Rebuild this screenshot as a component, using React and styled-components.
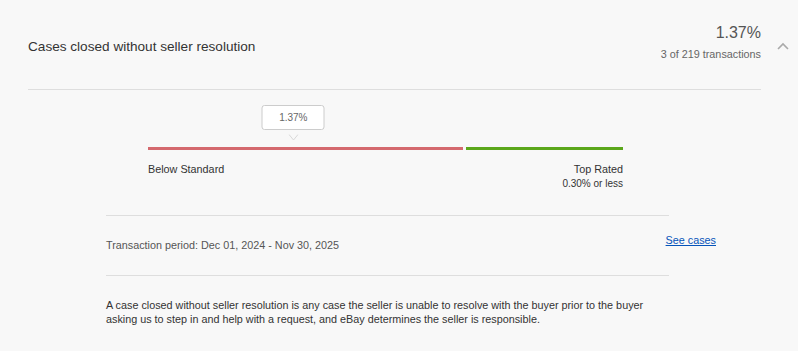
import React from 'react';
import styled, { createGlobalStyle } from 'styled-components';

const GlobalStyle = createGlobalStyle`
  html, body {
    margin: 0;
    padding: 0;
    background: #f8f8f8;
  }
  body {
    font-family: "Liberation Sans", Arial, Helvetica, sans-serif;
    color: #333;
  }
`;

const Page = styled.div`
  padding-left: 28px;
`;

const Header = styled.div`
  display: flex;
  align-items: flex-start;
`;

const HeaderMain = styled.div`
  box-sizing: border-box;
  width: 733px;
  height: 90px;
  padding-top: 22px;
  border-bottom: 1px solid #dedede;
  display: flex;
  justify-content: space-between;
  align-items: flex-start;
`;

const Title = styled.h2`
  margin: 15px 0 0;
  font-size: 13.6px;
  line-height: 20px;
  font-weight: normal;
  color: #333;
`;

const Summary = styled.div`
  text-align: right;
`;

const Rate = styled.div`
  font-size: 16px;
  line-height: 22px;
  color: #555;
`;

const Count = styled.div`
  margin-top: 3px;
  font-size: 10.8px;
  line-height: 14px;
  color: #666;
`;

const Toggle = styled.button`
  margin: 42px 0 0 16px;
  padding: 0;
  border: 0;
  background: none;
  width: 12px;
  height: 8px;
  display: flex;
  cursor: pointer;
`;

const Body = styled.div`
  margin-left: 78px;
  width: 563px;
  font-size: 10.8px;
`;

const Scale = styled.div`
  padding: 15px 46px 0 42px;
`;

const Track = styled.div`
  position: relative;
  padding-top: 42px;
`;

const Marker = styled.div`
  position: absolute;
  top: 0;
  transform: translateX(-50%);
  display: flex;
  flex-direction: column;
  align-items: center;
  gap: 4px;
`;

const Bubble = styled.div`
  box-sizing: border-box;
  width: 63px;
  height: 25px;
  background: #fff;
  border: 1px solid #ccc;
  border-radius: 3px;
  font-size: 10px;
  line-height: 23px;
  text-align: center;
  color: #666;
`;

const Bars = styled.div`
  display: flex;
  gap: 3px;
`;

const Bar = styled.div`
  flex: ${p => p.$grow};
  height: 3px;
  background: ${p => p.$color};
`;

const Labels = styled.div`
  margin-top: 12px;
  display: flex;
  justify-content: space-between;
  align-items: flex-start;
`;

const Label = styled.div`
  text-align: ${p => p.$align || 'left'};
  line-height: 14px;
  color: #333;
`;

const Threshold = styled.div`
  margin-top: 1px;
  font-size: 10px;
  line-height: 13px;
  color: #333;
`;

const Divider = styled.hr`
  margin: ${p => p.$top || 0}px 0 0;
  border: 0;
  border-top: 1px solid #dedede;
  height: 0;
`;

const PeriodRow = styled.div`
  width: 610px;
  padding: 17px 0 23px;
  display: flex;
  justify-content: space-between;
  align-items: flex-start;
`;

const Period = styled.div`
  margin-top: 5px;
  line-height: 14px;
  color: #555;
`;

const Link = styled.a`
  line-height: 14px;
  color: #0654ba;
  text-decoration: underline;
`;

const Note = styled.p`
  margin: 23px 0 0;
  line-height: 13.5px;
  color: #333;
`;

const ChevronUp = () => (
  <svg width="12" height="8" viewBox="0 0 12 8">
    <polyline points="1,7 6,2 11,7" fill="none" stroke="#aaa" strokeWidth="1.6" />
  </svg>
);

const ChevronDown = () => (
  <svg width="10" height="7" viewBox="0 0 10 7">
    <polyline points="0.5,0.5 5,6 9.5,0.5" fill="none" stroke="#d8d8d8" strokeWidth="1" />
  </svg>
);

export default function App() {
  const rate = '1.37%';
  const markerLeft = 30.6; // where the rate sits along the scale

  return (
    <Page>
      <GlobalStyle />
      <Header>
        <HeaderMain>
          <Title>Cases closed without seller resolution</Title>
          <Summary>
            <Rate>{rate}</Rate>
            <Count>3 of 219 transactions</Count>
          </Summary>
        </HeaderMain>
        <Toggle aria-label="collapse"><ChevronUp /></Toggle>
      </Header>

      <Body>
        <Scale>
          <Track>
            <Marker style={{ left: `${markerLeft}%` }}>
              <Bubble>{rate}</Bubble>
              <ChevronDown />
            </Marker>
            <Bars>
              <Bar $grow={315} $color="#d4696e" />
              <Bar $grow={157} $color="#5ba71b" />
            </Bars>
          </Track>
          <Labels>
            <Label>Below Standard</Label>
            <Label $align="right">
              Top Rated
              <Threshold>0.30% or less</Threshold>
            </Label>
          </Labels>
        </Scale>

        <Divider $top={25} />
        <PeriodRow>
          <Period>Transaction period: Dec 01, 2024 - Nov 30, 2025</Period>
          <Link href="#">See cases</Link>
        </PeriodRow>
        <Divider />

        <Note>
          A case closed without seller resolution is any case the seller is unable to resolve with the buyer prior to the buyer
          asking us to step in and help with a request, and eBay determines the seller is responsible.
        </Note>
      </Body>
    </Page>
  );
}
